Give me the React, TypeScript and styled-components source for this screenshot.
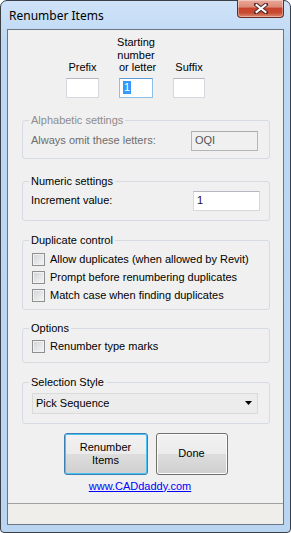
import React from "react";
import styled, { createGlobalStyle } from "styled-components";

const Global = createGlobalStyle`
  html, body { margin: 0; padding: 0; width: 291px; height: 533px; overflow: hidden; background: #ffffff; }
  * { box-sizing: border-box; }
`;

const Window = styled.div`
  width: 291px;
  height: 533px;
  border: 1px solid #3b4046;
  border-radius: 7px 7px 4px 4px;
  background: linear-gradient(180deg, #cfe3f8 0%, #bdd8f4 8%, #bad5f1 100%);
  display: flex;
  flex-direction: column;
  padding: 0 6px 7px 6px;
  font-family: "Liberation Sans", Arial, sans-serif;
  font-size: 11px;
  color: #000;
`;

const TitleBar = styled.div`
  height: 28px;
  display: flex;
  justify-content: space-between;
  align-items: flex-start;
  padding-left: 2px;
`;

const TitleText = styled.div`
  align-self: center;
  font-family: "Noto Sans", "Open Sans", sans-serif;
  font-size: 12px;
  line-height: 16px;
  color: #000;
  margin-top: 1px;
`;

const CloseButton = styled.div`
  width: 47px;
  height: 18px;
  margin-top: -1px;
  border: 1px solid #6b2a22;
  border-top: none;
  border-radius: 0 0 4px 4px;
  background: linear-gradient(180deg, #e9a99b 0%, #dc8a77 40%, #c7442c 50%, #c84b31 75%, #d98a70 100%);
  box-shadow: inset 0 0 0 1px rgba(255, 255, 255, 0.35);
  display: flex;
  align-items: center;
  justify-content: center;
`;

const Client = styled.div`
  flex: 1;
  border: 1px solid #6b7683;
  background: #f0f0f0;
  display: flex;
  flex-direction: column;
`;

const Main = styled.div`
  flex: 1;
  display: flex;
  flex-direction: column;
  padding-top: 6px;
`;

const HeaderRow = styled.div`
  display: flex;
  align-items: flex-end;
  padding-left: 58px;
  gap: 20px;
`;

const HeaderCol = styled.div<{ $w: number }>`
  width: ${(p) => p.$w}px;
  display: flex;
  flex-direction: column;
  align-items: center;
  gap: 4px;
`;

const HeaderLabel = styled.div`
  text-align: center;
  line-height: 12.5px;
  white-space: pre;
`;

const TextBox = styled.div<{ $w: number; $focus?: boolean; $disabled?: boolean }>`
  width: ${(p) => p.$w}px;
  height: 20px;
  flex: none;
  border: 1px solid ${(p) => (p.$focus ? "#8cc0ea" : p.$disabled ? "#b2b6b9" : "#d5d8dd")};
  border-top-color: ${(p) => (p.$focus ? "#5c9ad3" : p.$disabled ? "#a9acaf" : "#b4b7bd")};
  background: ${(p) => (p.$disabled ? "#f0f0f0" : "#ffffff")};
  color: ${(p) => (p.$disabled ? "#555555" : "#1a0a2a")};
  padding: 0 3px;
  display: flex;
  align-items: center;
  line-height: 13px;
`;

const Selected = styled.span`
  background: #3399ff;
  color: #ffffff;
  padding: 0 1px;
`;

const Group = styled.fieldset<{ $mt: number }>`
  margin: ${(p) => p.$mt}px 13px 0 14px;
  padding: 0;
  border: 1px solid #d5dbe0;
  border-radius: 3px;
  min-width: 0;
`;

const Legend = styled.legend<{ $disabled?: boolean }>`
  margin-left: 6px;
  padding: 0 2px;
  line-height: 13px;
  height: 13px;
  color: ${(p) => (p.$disabled ? "#8d8d8d" : "#000")};
`;

const GroupRow = styled.div<{ $pad: string }>`
  display: flex;
  align-items: center;
  justify-content: space-between;
  padding: ${(p) => p.$pad};
`;

const GroupList = styled.div<{ $pad: string }>`
  display: flex;
  flex-direction: column;
  padding: ${(p) => p.$pad};
`;

const Label = styled.span<{ $disabled?: boolean }>`
  line-height: 13px;
  color: ${(p) => (p.$disabled ? "#6d6d6d" : "#000")};
`;

const CheckRow = styled.label`
  height: 18px;
  display: flex;
  align-items: center;
  gap: 5px;
  line-height: 13px;
`;

const CheckBox = styled.span`
  width: 13px;
  height: 13px;
  border: 1px solid #8e8f8f;
  background: linear-gradient(135deg, #cfd2d6 0%, #e4e5e7 50%, #f6f6f6 100%);
  box-shadow: inset 0 0 0 1px #f2f2f2;
  flex: none;
`;

const Combo = styled.div`
  height: 21px;
  border: 1px solid #dadada;
  background: #ececec;
  display: flex;
  align-items: center;
  justify-content: space-between;
  padding-left: 3px;
  flex: 1;
`;

const ComboArrow = styled.div`
  width: 17px;
  height: 100%;
  display: flex;
  align-items: center;
  justify-content: center;
`;

const ButtonRow = styled.div`
  display: flex;
  justify-content: center;
  gap: 8px;
  margin-top: 9px;
`;

const Button = styled.div<{ $w: number; $default?: boolean }>`
  width: ${(p) => p.$w}px;
  height: 42px;
  border: 1px solid ${(p) => (p.$default ? "#3c7fb1" : "#707070")};
  border-radius: 3px;
  background: linear-gradient(180deg, #f2f2f2 0%, #ebebeb 49%, #dddddd 51%, #cfcfcf 100%);
  box-shadow: inset 0 0 0 1px ${(p) => (p.$default ? "#48c3f4" : "#fcfcfc")};
  display: flex;
  align-items: center;
  justify-content: center;
  text-align: center;
  line-height: 12.5px;
  white-space: pre;
`;

const LinkRow = styled.div`
  display: flex;
  justify-content: center;
  padding-right: 11px;
  margin-top: 5px;
`;

const Link = styled.a`
  color: #0000ff;
  text-decoration: underline;
  line-height: 13px;
`;

const StatusBar = styled.div`
  height: 21px;
  border-top: 1px solid #a0a0a0;
  background: #f0eeeb;
`;

const CloseIcon = () => (
  <svg width="14" height="11" viewBox="0 0 14 11">
    <path d="M2 1.5 L12 9.5 M12 1.5 L2 9.5" stroke="#4a2a2a" strokeWidth="4" strokeLinecap="square" />
    <path d="M2.5 2 L11.5 9 M11.5 2 L2.5 9" stroke="#ffffff" strokeWidth="2" strokeLinecap="square" />
  </svg>
);

const ArrowIcon = () => (
  <svg width="7" height="4" viewBox="0 0 7 4">
    <path d="M0 0 H7 L3.5 4 Z" fill="#000" />
  </svg>
);

export default function App() {
  return (
    <>
      <Global />
      <Window>
        <TitleBar>
          <TitleText>Renumber Items</TitleText>
          <CloseButton>
            <CloseIcon />
          </CloseButton>
        </TitleBar>
        <Client>
          <Main>
            <HeaderRow>
              <HeaderCol $w={33}>
                <HeaderLabel>Prefix</HeaderLabel>
                <TextBox $w={33} />
              </HeaderCol>
              <HeaderCol $w={34}>
                <HeaderLabel>{"Starting\nnumber\n or letter"}</HeaderLabel>
                <TextBox $w={34} $focus>
                  <Selected>1</Selected>
                </TextBox>
              </HeaderCol>
              <HeaderCol $w={32}>
                <HeaderLabel>Suffix</HeaderLabel>
                <TextBox $w={32} />
              </HeaderCol>
            </HeaderRow>

            <Group $mt={16}>
              <Legend $disabled>Alphabetic settings</Legend>
              <GroupRow $pad="4px 11px 7px 8px">
                <Label $disabled>Always omit these letters:</Label>
                <TextBox $w={67} $disabled>OQI</TextBox>
              </GroupRow>
            </Group>

            <Group $mt={16}>
              <Legend>Numeric settings</Legend>
              <GroupRow $pad="3px 9px 9px 8px">
                <Label>Increment value:</Label>
                <TextBox $w={67}>1</TextBox>
              </GroupRow>
            </Group>

            <Group $mt={13}>
              <Legend>Duplicate control</Legend>
              <GroupList $pad="4px 9px 4px 9px">
                <CheckRow>
                  <CheckBox />
                  Allow duplicates (when allowed by Revit)
                </CheckRow>
                <CheckRow>
                  <CheckBox />
                  Prompt before renumbering duplicates
                </CheckRow>
                <CheckRow>
                  <CheckBox />
                  Match case when finding duplicates
                </CheckRow>
              </GroupList>
            </Group>

            <Group $mt={12}>
              <Legend>Options</Legend>
              <GroupList $pad="3px 9px 6px 9px">
                <CheckRow>
                  <CheckBox />
                  Renumber type marks
                </CheckRow>
              </GroupList>
            </Group>

            <Group $mt={13}>
              <Legend>Selection Style</Legend>
              <GroupRow $pad="4px 11px 9px 9px">
                <Combo>
                  <Label>Pick Sequence</Label>
                  <ComboArrow>
                    <ArrowIcon />
                  </ComboArrow>
                </Combo>
              </GroupRow>
            </Group>

            <ButtonRow>
              <Button $w={84} $default>{"Renumber\nItems"}</Button>
              <Button $w={72}>Done</Button>
            </ButtonRow>
            <LinkRow>
              <Link href="#">www.CADdaddy.com</Link>
            </LinkRow>
          </Main>
          <StatusBar />
        </Client>
      </Window>
    </>
  );
}
